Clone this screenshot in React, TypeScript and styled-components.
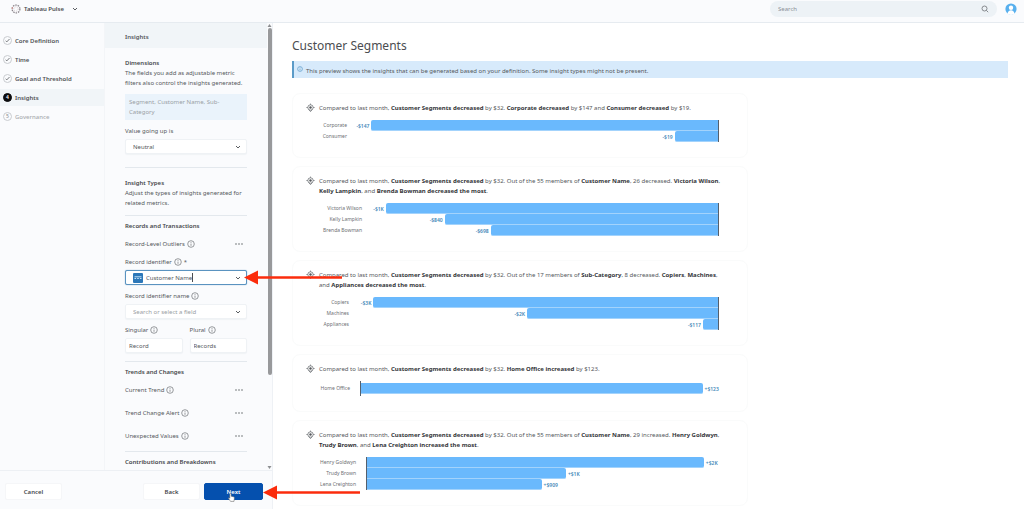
import React from "react";
import styled, { createGlobalStyle, css } from "styled-components";

const GlobalStyle = createGlobalStyle`
  *, *::before, *::after { box-sizing: border-box; }
  body { margin: 0; background: #fff; }
  body, button, input, select {
    font-family: "Noto Sans", "Open Sans", sans-serif;
    font-size: 6px;
    line-height: 10px;
    color: #55585c;
  }
  h1, h2, h3, p, ul { margin: 0; padding: 0; font-size: inherit; font-weight: inherit; }
`;

const Page = styled.div`
  position: relative;
  display: flex;
  flex-direction: column;
  height: 100vh;
  overflow: hidden;
`;

/* ---------- top bar ---------- */

const TopBar = styled.header`
  display: flex;
  flex: none;
  align-items: center;
  gap: 8px;
  height: 23px;
  padding: 0 7px 5px 11px;
  background: #fafbfd;
  border-bottom: 1px solid #e6ebf0;
`;

const Brand = styled.button`
  display: flex;
  align-items: center;
  gap: 3px;
  padding: 0;
  border: 0;
  background: none;
  color: #4a4c50;
  font-weight: 600;
  svg:last-child { margin-left: 5px; }
`;

const SearchBox = styled.label`
  display: flex;
  align-items: center;
  width: 227px;
  height: 16px;
  margin-left: auto;
  padding: 0 8px;
  border-radius: 8px;
  background: #edf2f6;
`;

const SearchInput = styled.input`
  flex: 1;
  min-width: 0;
  padding: 0;
  border: 0;
  outline: 0;
  background: none;
  &::placeholder { color: #8b9096; opacity: 1; }
`;

const AvatarButton = styled.button`
  display: flex;
  padding: 0;
  border: 0;
  background: none;
`;

/* ---------- layout ---------- */

const Body = styled.div`
  display: flex;
  flex: 1;
  min-height: 0;
`;

const Editor = styled.div`
  display: flex;
  flex: none;
  flex-direction: column;
  width: 273px;
  background: #fafbfd;
  border-right: 1px solid #eef1f5;
`;

const EditorColumns = styled.div`
  display: flex;
  flex: 1;
  min-height: 0;
`;

const StepList = styled.ul`
  display: flex;
  flex: none;
  flex-direction: column;
  gap: 2px;
  width: 105px;
  && { padding-top: 9px; }
  border-right: 1px solid #f3f5f8;
  list-style: none;
`;

const Step = styled.a<{ $state: "done" | "current" | "todo" }>`
  display: flex;
  align-items: center;
  gap: 3px;
  height: 17px;
  padding-left: 3px;
  text-decoration: none;
  font-weight: 600;
  color: #505256;
  ${(p) => p.$state === "current" && css`background: #f1f5f8;`}
  ${(p) => p.$state === "todo" && css`color: #a9acb0; font-weight: 500;`}
`;

const StepMark = styled.span<{ $filled?: boolean }>`
  display: flex;
  align-items: center;
  justify-content: center;
  width: 9px;
  height: 9px;
  border: 1px solid ${(p) => (p.$filled ? "#0c0c0e" : "#c9ccd0")};
  border-radius: 50%;
  background: ${(p) => (p.$filled ? "#0c0c0e" : "transparent")};
  color: ${(p) => (p.$filled ? "#fff" : "#8f9296")};
  font-size: 5px;
  line-height: 7px;
`;

const Panel = styled.section`
  flex: 1;
  min-width: 0;
  overflow: hidden;
`;

const PanelHeader = styled.h2`
  display: flex;
  align-items: center;
  height: 25px;
  && { padding: 3px 20px 0; font-weight: 600; }
  background: #f1f5f8;
`;

const PanelBody = styled.div`
  padding: 10px 20px;
`;

const Heading = styled.h3`
  && { font-weight: 600; }
  color: #45474b;
`;

const DimensionBox = styled.p`
  && { margin: 6px 0; padding: 3px 4px; }
  background: #eaf3fb;
  color: #9a9fa5;
`;

const Divider = styled.hr<{ $above: number; $below: number }>`
  height: 1px;
  margin: ${(p) => p.$above}px 0 ${(p) => p.$below}px;
  border: 0;
  background: #e3e8ed;
`;

const Field = styled.div`
  display: flex;
  flex: 1;
  flex-direction: column;
  gap: 3px;
  min-width: 0;
`;

const FieldStack = styled.div`
  display: flex;
  flex-direction: column;
  gap: 6px;
  margin-top: 8px;
`;

const FieldPair = styled.div`
  display: flex;
  gap: 7px;
`;

const FieldLabel = styled.label`
  display: flex;
  align-items: center;
  gap: 2px;
`;

const Control = styled.div<{ $active?: boolean; $inset?: number }>`
  display: flex;
  align-items: center;
  height: 15px;
  padding: 0 5px 0 ${(p) => p.$inset ?? 7}px;
  border: 1px solid ${(p) => (p.$active ? "#5a93c0" : "#eff2f5")};
  border-radius: 2px;
  background: #fff;
  box-shadow: ${(p) => (p.$active ? "0 0 1px #5a93c0" : "0 1px 1px #f0f3f6")};
`;

const TextInput = styled.input<{ $hug?: boolean }>`
  ${(p) => (p.$hug ? css`field-sizing: content;` : css`flex: 1;`)}
  min-width: 0;
  width: ${(p) => (p.$hug ? "auto" : "0")};
  padding: 0;
  border: 0;
  outline: 0;
  background: none;
  &::placeholder { color: #9a9ea3; opacity: 1; }
`;

const Picker = styled.select`
  flex: 1;
  min-width: 0;
  padding: 0;
  border: 0;
  outline: 0;
  appearance: none;
  background: none;
`;

const FieldTypeBadge = styled.svg`
  flex: none;
  margin-right: 3px;
`;

const Caret = styled.span`
  width: 1px;
  height: 9px;
  margin-right: auto;
  background: #4a4c50;
`;

const OptionRow = styled.div`
  display: flex;
  align-items: center;
  justify-content: space-between;
  margin-top: 8px;
  padding-right: 4px;
  & + & { margin-top: 13px; }
`;

const OptionName = styled.span`
  display: flex;
  align-items: center;
  gap: 2px;
`;

const MoreButton = styled.button`
  display: flex;
  padding: 0;
  border: 0;
  background: none;
`;

const Scrollbar = styled.div`
  display: flex;
  flex: none;
  flex-direction: column;
  align-items: center;
  width: 5px;
  padding: 1px 0;
`;

const ScrollThumb = styled.div`
  width: 4px;
  height: 78%;
  margin: 1px 0 auto;
  border-radius: 2px;
  background: #98999b;
`;

const Footer = styled.footer`
  display: flex;
  flex: none;
  gap: 4px;
  height: 39px;
  padding: 12px 9px 9px 5px;
  border-top: 1px solid #edf0f4;
`;

const Button = styled.button<{ $primary?: boolean; $first?: boolean }>`
  width: ${(p) => (p.$primary ? 59 : 57)}px;
  margin-right: ${(p) => (p.$first ? "auto" : 0)};
  padding: 0;
  border: 1px solid ${(p) => (p.$primary ? "#0550ae" : "#f5f6f8")};
  border-radius: 2px;
  background: ${(p) => (p.$primary ? "#0550ae" : "#fff")};
  color: ${(p) => (p.$primary ? "#fff" : "#45474b")};
  font-weight: 600;
`;

/* ---------- preview ---------- */

const Preview = styled.main`
  flex: 1;
  min-width: 0;
  padding: 15px 16px 0 19px;
  overflow: hidden;
`;

const Title = styled.h1`
  && { font-size: 12px; }
  line-height: 16px;
  color: #4b4d51;
`;

const Notice = styled.p`
  display: flex;
  align-items: center;
  gap: 3px;
  height: 17px;
  && { margin: 7px 0 15px; padding: 2px 3px 0; }
  border-left: 2px solid #5b9bc8;
  background: #d7eafb;
  svg { margin-bottom: 3px; }
`;

const CardList = styled.div`
  display: flex;
  flex-direction: column;
  gap: 8px;
  max-width: 456px;
`;

const Card = styled.article`
  padding: 9px 14px 15px 13px;
  border: 1px solid #fafbfb;
  border-radius: 8px;
`;

const Summary = styled.div`
  display: flex;
  align-items: flex-start;
  gap: 4px;
  padding-right: 4px;
  svg { flex: none; }
  b { font-weight: 700; color: #333539; }
`;

const Chart = styled.div`
  display: flex;
  gap: 10px;
  margin: 7px 14px 0;
`;

const ChartLabels = styled.div<{ $width: number; $pad: number }>`
  flex: none;
  width: ${(p) => p.$width}px;
  padding: ${(p) => p.$pad}px 0;
  font-size: 5px;
  line-height: 11px;
  text-align: right;
  white-space: nowrap;
  color: #6d7074;
`;

const Plot = styled.div<{ $rising: boolean; $pad: number }>`
  flex: 1;
  padding: ${(p) => p.$pad}px 0;
  border: 0 solid #55606c;
  ${(p) => (p.$rising ? css`border-left-width: 1px;` : css`border-right-width: 1px;`)}
`;

const PlotRow = styled.div<{ $rising: boolean }>`
  display: flex;
  flex-direction: ${(p) => (p.$rising ? "row" : "row-reverse")};
  align-items: center;
  gap: 2px;
  height: 11px;
  font-size: 5px;
  font-weight: 600;
  white-space: nowrap;
  color: #4488b8;
`;

const Bar = styled.div<{ $rising: boolean }>`
  flex: none;
  height: 11px;
  border-bottom: 1px solid #a3d3fc;
  border-radius: ${(p) => (p.$rising ? "0 2px 2px 0" : "2px 0 0 2px")};
  background: #6ab9fd;
`;

/* ---------- callouts ---------- */

const FieldCallout = styled.svg`
  position: absolute;
  left: 244px;
  top: 270px;
`;

const FooterCallout = styled.svg`
  position: absolute;
  left: 263px;
  bottom: 9px;
`;

const Pointer = styled.svg`
  position: absolute;
  left: 228px;
  bottom: 7px;
`;

/* ---------- icons ---------- */

const Chevron = () => (
  <svg width="6" height="6" viewBox="0 0 6 6" fill="none" stroke="#5a5d61" strokeWidth="1">
    <path d="M1 2l2 2 2-2" />
  </svg>
);

const Info = () => (
  <svg width="8" height="8" viewBox="0 0 8 8" fill="none" stroke="#6d7074" strokeWidth=".7">
    <circle cx="4" cy="4" r="3.3" />
    <path d="M4 3.6v2.2M4 2.1v.8" />
  </svg>
);

const Dots = () => (
  <svg width="8" height="4" viewBox="0 0 8 4" fill="#6a6d71">
    <circle cx="1" cy="2" r=".8" />
    <circle cx="4" cy="2" r=".8" />
    <circle cx="7" cy="2" r=".8" />
  </svg>
);

const Check = () => (
  <svg width="5" height="5" viewBox="0 0 5 5" fill="none" stroke="#6a6d71" strokeWidth=".9">
    <path d="M.6 2.7l1.2 1.2L4.5 1" />
  </svg>
);

const PulseLogo = () => (
  <svg width="10" height="10" viewBox="0 0 10 10" fill="none">
    <circle cx="5" cy="5" r="3.9" stroke="#8b858b" strokeWidth="1.3" strokeDasharray="1.5 .95" />
    <circle cx="5" cy="5" r="2.2" stroke="#c9b9bb" strokeWidth=".7" strokeDasharray="1 1" />
    <circle cx="1.4" cy="4" r=".7" fill="#d98a84" />
  </svg>
);

const InsightIcon = () => (
  <svg width="9" height="10" viewBox="0 0 9 10" fill="none" stroke="#707377" strokeWidth=".8">
    <circle cx="4.5" cy="4.5" r="2.7" />
    <path d="M4.5 .6v1.2M.4 4.5h1.4M7.2 4.5h1.4M3 6.8l1.5 1.8L6 6.8" />
    <circle cx="4.5" cy="4.5" r="1.2" fill="#55585c" stroke="none" />
  </svg>
);

const ArrowShape = ({ length }: { length: number }) => (
  <g fill="#fb2c0c">
    <path d="M0 7.5L14 .5v14z" />
    <path d={`M12 6.3h${length - 12}v2.4H12z`} />
  </g>
);

/* ---------- data ---------- */

type Insight = {
  text: React.ReactNode;
  rising?: boolean;
  labelWidth: number;
  pad?: number;
  rows: { name: string; value: string; share: number }[];
};

const lead = (
  <>
    Compared to last month, <b>Customer Segments decreased</b> by $32.{" "}
  </>
);

const insights: Insight[] = [
  {
    text: <>{lead}<b>Corporate decreased</b> by $147 and <b>Consumer decreased</b> by $19.</>,
    labelWidth: 27,
    rows: [
      { name: "Corporate", value: "-$147", share: 96 },
      { name: "Consumer", value: "-$19", share: 12 },
    ],
  },
  {
    text: <>{lead}Out of the 55 members of <b>Customer Name</b>, 26 decreased. <b>Victoria Wilson</b>, <b>Kelly Lampkin</b>, and <b>Brenda Bowman decreased the most</b>.</>,
    labelWidth: 42,
    rows: [
      { name: "Victoria Wilson", value: "-$1K", share: 96 },
      { name: "Kelly Lampkin", value: "-$840", share: 79 },
      { name: "Brenda Bowman", value: "-$698", share: 65.7 },
    ],
  },
  {
    text: <>{lead}Out of the 17 members of <b>Sub-Category</b>, 8 decreased. <b>Copiers</b>, <b>Machines</b>, and <b>Appliances decreased the most</b>.</>,
    labelWidth: 29,
    rows: [
      { name: "Copiers", value: "-$3K", share: 96 },
      { name: "Machines", value: "-$2K", share: 53.2 },
      { name: "Appliances", value: "-$117", share: 4.2 },
    ],
  },
  {
    text: <>{lead}<b>Home Office increased</b> by $123.</>,
    rising: true,
    labelWidth: 30,
    pad: 2,
    rows: [{ name: "Home Office", value: "+$123", share: 95.4 }],
  },
  {
    text: <>{lead}Out of the 55 members of <b>Customer Name</b>, 29 increased. <b>Henry Goldwyn</b>, <b>Trudy Brown</b>, and <b>Lena Creighton increased the most</b>.</>,
    rising: true,
    labelWidth: 36,
    rows: [
      { name: "Henry Goldwyn", value: "+$2K", share: 95.7 },
      { name: "Trudy Brown", value: "+$1K", share: 56.5 },
      { name: "Lena Creighton", value: "+$909", share: 49.6 },
    ],
  },
];

const InsightCard = ({ text, rising = false, labelWidth, pad = 0, rows }: Insight) => (
  <Card>
    <Summary>
      <InsightIcon />
      <p>{text}</p>
    </Summary>
    <Chart>
      <ChartLabels $width={labelWidth} $pad={pad}>
        {rows.map((r) => <div key={r.name}>{r.name}</div>)}
      </ChartLabels>
      <Plot $rising={rising} $pad={pad}>
        {rows.map((r) => (
          <PlotRow key={r.name} $rising={rising}>
            <Bar $rising={rising} style={{ width: `${r.share}%` }} />
            {r.value}
          </PlotRow>
        ))}
      </Plot>
    </Chart>
  </Card>
);

const Option = ({ name }: { name: string }) => (
  <OptionRow>
    <OptionName>{name} <Info /></OptionName>
    <MoreButton aria-label={`${name} options`}><Dots /></MoreButton>
  </OptionRow>
);

export default function App() {
  return (
    <Page>
      <GlobalStyle />
      <TopBar>
        <Brand><PulseLogo />Tableau Pulse<Chevron /></Brand>
        <SearchBox>
          <SearchInput type="search" placeholder="Search" aria-label="Search" />
          <svg width="8" height="8" viewBox="0 0 8 8" fill="none" stroke="#7d8084" strokeWidth=".9">
            <circle cx="3.5" cy="3.5" r="2.5" />
            <path d="M5.3 5.3L7.2 7.2" />
          </svg>
        </SearchBox>
        <AvatarButton aria-label="Account">
          <svg width="12" height="12" viewBox="0 0 12 12">
            <circle cx="6" cy="6" r="5.6" fill="#58b0ee" />
            <circle cx="6" cy="4.8" r="2.2" fill="#fff" />
            <path d="M2.6 11c0-5 6.8-5 6.8 0l-3.4 1z" fill="#fff" />
          </svg>
        </AvatarButton>
      </TopBar>

      <Body>
        <Editor>
          <EditorColumns>
            <StepList>
              {["Core Definition", "Time", "Goal and Threshold"].map((s) => (
                <li key={s}><Step href="#" $state="done"><StepMark><Check /></StepMark>{s}</Step></li>
              ))}
              <li><Step href="#" $state="current"><StepMark $filled>4</StepMark>Insights</Step></li>
              <li><Step href="#" $state="todo"><StepMark>5</StepMark>Governance</Step></li>
            </StepList>

            <Panel>
              <PanelHeader>Insights</PanelHeader>
              <PanelBody>
                <Heading>Dimensions</Heading>
                <p>The fields you add as adjustable metric<br />filters also control the insights generated.</p>
                <DimensionBox>Segment, Customer Name, Sub-<br />Category</DimensionBox>
                <Field>
                  <FieldLabel htmlFor="direction">Value going up is</FieldLabel>
                  <Control>
                    <Picker id="direction" defaultValue="Neutral"><option>Neutral</option></Picker>
                    <Chevron />
                  </Control>
                </Field>
                <Divider $above={13} $below={10} />
                <Heading>Insight Types</Heading>
                <p>Adjust the types of insights generated for<br />related metrics.</p>
                <Divider $above={7} $below={5} />
                <Heading>Records and Transactions</Heading>
                <Option name="Record-Level Outliers" />
                <FieldStack>
                  <Field>
                    <FieldLabel htmlFor="record-id">Record identifier <Info /> *</FieldLabel>
                    <Control $active>
                      <FieldTypeBadge width="10" height="10" viewBox="0 0 10 10">
                        <rect width="10" height="10" rx="1" fill="#2c77b8" />
                        <path d="M1.5 5.5h1.6M4.2 5.5h1.6M6.9 5.5h1.6M1.5 3.8h7" stroke="#bfe0f7" strokeWidth="1" />
                      </FieldTypeBadge>
                      <TextInput id="record-id" $hug defaultValue="Customer Name" />
                      <Caret />
                      <Chevron />
                    </Control>
                  </Field>
                  <Field>
                    <FieldLabel htmlFor="record-name">Record identifier name <Info /></FieldLabel>
                    <Control>
                      <TextInput id="record-name" placeholder="Search or select a field" />
                      <Chevron />
                    </Control>
                  </Field>
                  <FieldPair>
                    <Field>
                      <FieldLabel htmlFor="singular">Singular <Info /></FieldLabel>
                      <Control $inset={3}><TextInput id="singular" defaultValue="Record" /></Control>
                    </Field>
                    <Field>
                      <FieldLabel htmlFor="plural">Plural <Info /></FieldLabel>
                      <Control $inset={3}><TextInput id="plural" defaultValue="Records" /></Control>
                    </Field>
                  </FieldPair>
                </FieldStack>
                <Divider $above={8} $below={5} />
                <Heading>Trends and Changes</Heading>
                <Option name="Current Trend" />
                <Option name="Trend Change Alert" />
                <Option name="Unexpected Values" />
                <Divider $above={10} $below={5} />
                <Heading>Contributions and Breakdowns</Heading>
              </PanelBody>
            </Panel>

            <Scrollbar>
              <svg width="5" height="3" viewBox="0 0 5 3"><path d="M.5 3L2.5 0l2 3z" fill="#8d8f92" /></svg>
              <ScrollThumb />
              <svg width="5" height="3" viewBox="0 0 5 3"><path d="M.5 0l2 3 2-3z" fill="#8d8f92" /></svg>
            </Scrollbar>
          </EditorColumns>

          <Footer>
            <Button $first>Cancel</Button>
            <Button>Back</Button>
            <Button $primary>Next</Button>
          </Footer>
        </Editor>

        <Preview>
          <Title>Customer Segments</Title>
          <Notice>
            <svg width="6" height="6" viewBox="0 0 6 6" fill="none" stroke="#5b9bc8" strokeWidth=".7">
              <circle cx="3" cy="3" r="2.4" />
              <path d="M3 2.6v1.8M3 1.5v.6" />
            </svg>
            This preview shows the insights that can be generated based on your definition. Some insight types might not be present.
          </Notice>
          <CardList>
            {insights.map((item, i) => <InsightCard key={i} {...item} />)}
          </CardList>
        </Preview>
      </Body>

      <FieldCallout width="98" height="15" viewBox="0 0 98 15"><ArrowShape length={98} /></FieldCallout>
      <FooterCallout width="97" height="15" viewBox="0 0 97 15"><ArrowShape length={97} /></FooterCallout>
      <Pointer width="7" height="9" viewBox="0 0 7 9">
        <path d="M2 .6c.8-.4 1.2.2 1.2.8v1.8l2.4.6c.7.2.9.7.8 1.3L6 8.4H2.6L.5 5.6c-.3-.6.3-1 .8-.7l.5.4V1.2z" fill="#fff" stroke="#555" strokeWidth=".5" />
      </Pointer>
    </Page>
  );
}
